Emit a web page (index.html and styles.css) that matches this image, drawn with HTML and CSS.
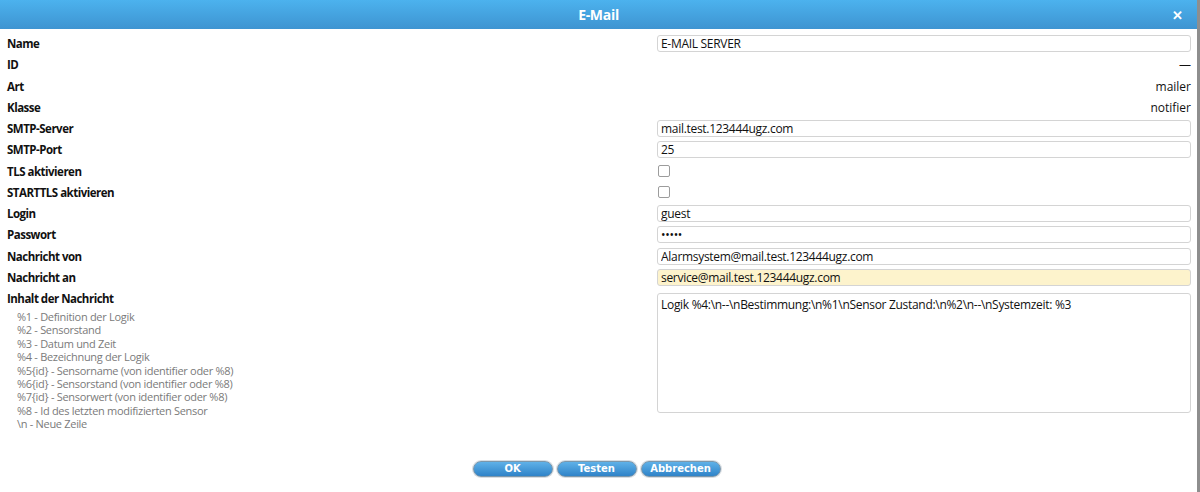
FILE: index.html
```html
<!DOCTYPE html>
<html lang="de">
<head>
    <meta charset="UTF-8">
    <title>E-Mail</title>
    <link rel="stylesheet" href="styles.css">
</head>
<body>
    <div class="dialog">
        <div class="titlebar">
            <span class="title">E-Mail</span>
            <span class="close">&#x2715;</span>
        </div>
        <div class="form">
            <div class="label">Name</div>
            <div class="value"><input class="field" type="text" value="E-MAIL SERVER"></div>

            <div class="label">ID</div>
            <div class="value text">&mdash;</div>

            <div class="label">Art</div>
            <div class="value text">mailer</div>

            <div class="label">Klasse</div>
            <div class="value text">notifier</div>

            <div class="label">SMTP-Server</div>
            <div class="value"><input class="field" type="text" value="mail.test.123444ugz.com"></div>

            <div class="label">SMTP-Port</div>
            <div class="value"><input class="field" type="text" value="25"></div>

            <div class="label">TLS aktivieren</div>
            <div class="value"><span class="check"></span></div>

            <div class="label">STARTTLS aktivieren</div>
            <div class="value"><span class="check"></span></div>

            <div class="label">Login</div>
            <div class="value"><input class="field" type="text" value="guest"></div>

            <div class="label">Passwort</div>
            <div class="value"><input class="field" type="password" value="12345"></div>

            <div class="label">Nachricht von</div>
            <div class="value"><input class="field" type="text" value="Alarmsystem@mail.test.123444ugz.com"></div>

            <div class="label">Nachricht an</div>
            <div class="value"><input class="field highlight" type="text" value="service@mail.test.123444ugz.com"></div>

            <div class="label last">
                Inhalt der Nachricht
                <ul class="help">
                    <li>%1 - Definition der Logik</li>
                    <li>%2 - Sensorstand</li>
                    <li>%3 - Datum und Zeit</li>
                    <li>%4 - Bezeichnung der Logik</li>
                    <li>%5{id} - Sensorname (von identifier oder %8)</li>
                    <li>%6{id} - Sensorstand (von identifier oder %8)</li>
                    <li>%7{id} - Sensorwert (von identifier oder %8)</li>
                    <li>%8 - Id des letzten modifizierten Sensor</li>
                    <li>\n - Neue Zeile</li>
                </ul>
            </div>
            <div class="value last"><textarea class="message">Logik %4:\n--\nBestimmung:\n%1\nSensor Zustand:\n%2\n--\nSystemzeit: %3</textarea></div>
        </div>
        <div class="buttons">
            <button class="btn">OK</button>
            <button class="btn">Testen</button>
            <button class="btn">Abbrechen</button>
        </div>
    </div>
</body>
</html>
```

FILE: styles.css
```css
html, body {
    margin: 0;
    padding: 0;
    background-color: white;
}
body {
    font-family: "Open Sans", "Liberation Sans", sans-serif;
    font-size: 12px;
    color: #111;
}
.dialog {
    width: 1197px;
    height: 492px;
    border-right: 3px solid #8e8e8e;
    display: flex;
    flex-direction: column;
}
.titlebar {
    height: 29px;
    background: linear-gradient(#4cb2ee, #3e94d1);
    color: white;
    display: flex;
    align-items: center;
    justify-content: center;
    position: relative;
}
.title {
    font-weight: bold;
    font-size: 14px;
    letter-spacing: -0.3px;
}
.close {
    position: absolute;
    right: 14px;
    top: 6px;
    font-size: 13px;
    font-weight: bold;
}
.form {
    display: grid;
    grid-template-columns: 1fr 534px;
    grid-auto-rows: 21.25px;
    padding: 5px 6px 0 7px;
}
.label {
    font-weight: bold;
    font-size: 11.5px;
    letter-spacing: -0.5px;
    line-height: 19px;
}
.value {
    display: flex;
    align-items: center;
}
.value.text {
    justify-content: flex-end;
    padding-bottom: 2px;
}
.field {
    box-sizing: border-box;
    width: 100%;
    height: 17px;
    margin: 0 0 2px 0;
    padding: 0 3px;
    border: 1px solid #d4d4d4;
    border-radius: 3px;
    font-family: inherit;
    font-size: 12px;
    letter-spacing: -0.3px;
    color: #111;
    background-color: white;
}
.field.highlight {
    background-color: #fdf3cc;
}
.check {
    width: 10px;
    height: 10px;
    margin-left: 1px;
    margin-bottom: 3px;
    border: 1px solid #9c9c9c;
    border-radius: 2px;
}
.label.last, .value.last {
    grid-row: span 7;
}
.value.last {
    align-items: flex-start;
    padding-top: 4px;
}
.message {
    box-sizing: border-box;
    width: 100%;
    height: 120px;
    margin: 0;
    padding: 2px 3px;
    border: 1px solid #d4d4d4;
    border-radius: 3px;
    font-family: inherit;
    font-size: 12px;
    letter-spacing: -0.3px;
    color: #111;
    resize: none;
}
.help {
    list-style: none;
    margin: 2px 0 0 0;
    padding: 0 0 0 10px;
    font-weight: normal;
    font-size: 11px;
    line-height: 13.4px;
    letter-spacing: -0.3px;
    color: #7a7a7a;
}
.buttons {
    display: flex;
    justify-content: center;
    gap: 4px;
    margin-top: auto;
    margin-bottom: 15px;
    padding-right: 4px;
}
.btn {
    width: 80px;
    height: 16px;
    padding: 0;
    border: 1px solid #7c97ab;
    border-radius: 8px;
    background: linear-gradient(#5fb1e8, #2f83c8);
    color: white;
    font-family: "DejaVu Sans", Verdana, sans-serif;
    font-weight: bold;
    font-size: 10px;
    line-height: 14px;
    box-shadow: 0 0 0 1px #d8dde2;
}
```
